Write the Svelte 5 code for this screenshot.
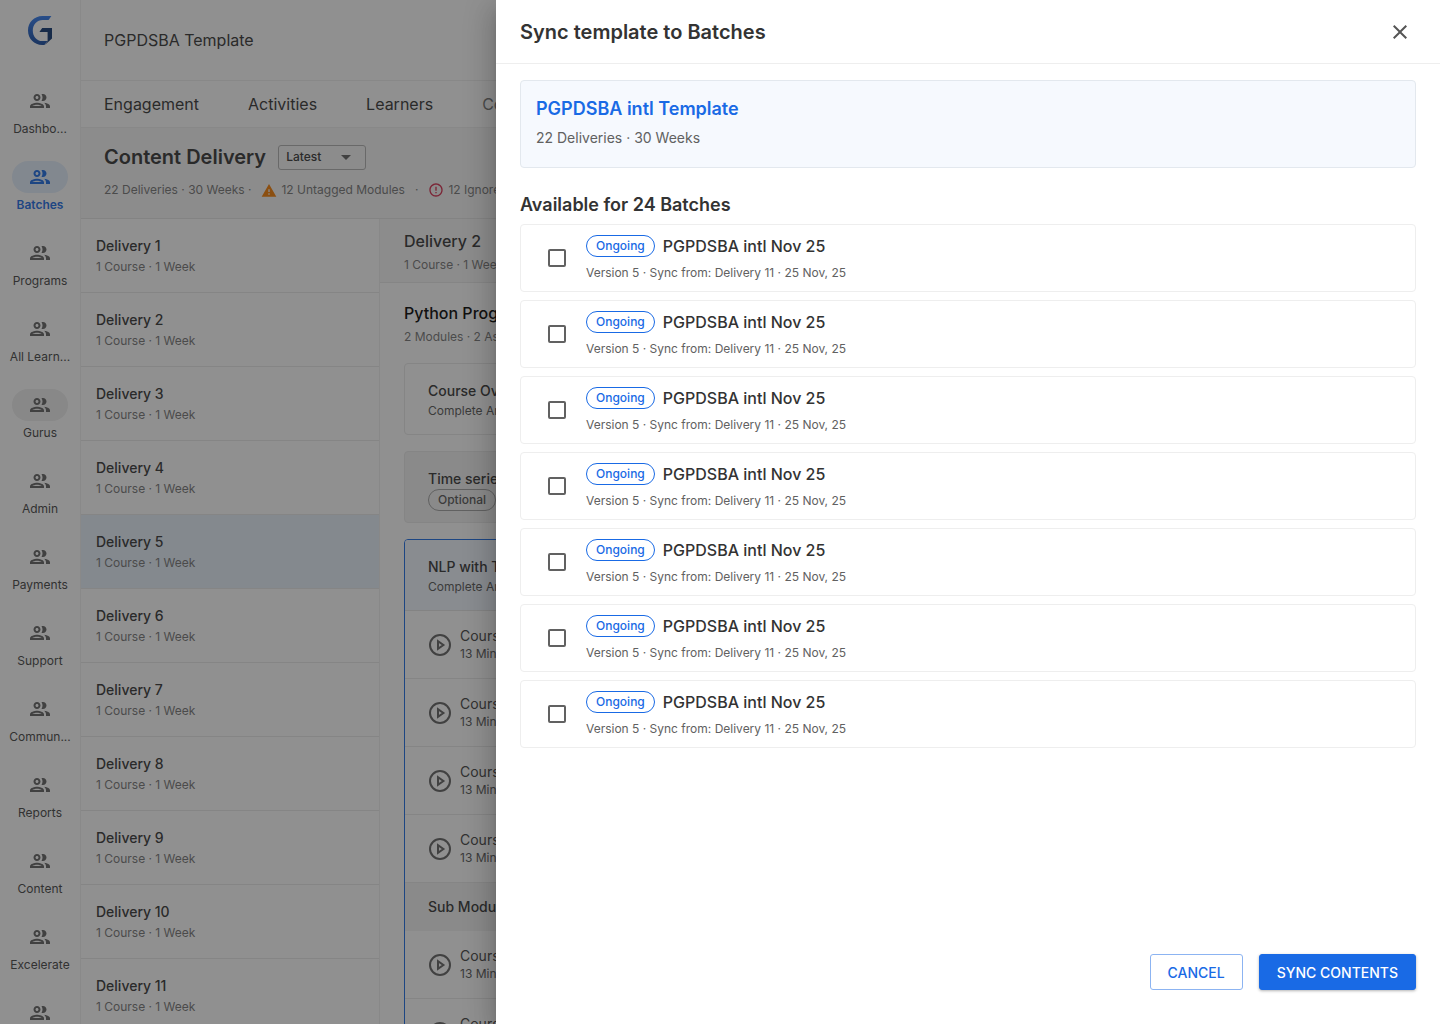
<script>
  const nav = ['Dashbo...', 'Batches', 'Programs', 'All Learn...', 'Gurus', 'Admin', 'Payments', 'Support', 'Commun...', 'Reports', 'Content', 'Excelerate', 'Settings'];
  const deliveries = Array.from({ length: 11 }, (_, i) => i + 1);
  let batches = $state(Array.from({ length: 7 }, () => ({ checked: false })));
  let version = $state('Latest');
</script>

{#snippet people()}
  <svg width="24" height="24" viewBox="0 0 24 24" fill="currentColor" aria-hidden="true">
    <path d="M9 13.75c-2.34 0-7 1.17-7 3.5V19h14v-1.75c0-2.33-4.66-3.5-7-3.5zM4.34 17c.84-.58 2.87-1.25 4.66-1.25s3.82.67 4.66 1.25H4.34zM9 12c1.93 0 3.5-1.57 3.5-3.5S10.93 5 9 5 5.5 6.57 5.5 8.5 7.07 12 9 12zm0-5c.83 0 1.5.67 1.5 1.5S9.83 10 9 10s-1.5-.67-1.5-1.5S8.17 7 9 7zm7.04 6.81c1.16.84 1.96 1.96 1.96 3.44V19h4v-1.75c0-2.02-3.5-3.17-5.96-3.44zM15 12c1.93 0 3.5-1.57 3.5-3.5S16.93 5 15 5c-.54 0-1.04.13-1.5.35.63.89 1 1.98 1 3.15s-.37 2.26-1 3.15c.46.22.96.35 1.5.35z" />
  </svg>
{/snippet}

{#snippet lesson()}
  <li class="lesson">
    <svg width="24" height="24" viewBox="0 0 24 24" fill="none" stroke="currentColor" stroke-width="2" aria-hidden="true">
      <circle cx="12" cy="12" r="10" />
      <path d="M10 8.2v7.6l5.4-3.8z" />
    </svg>
    <div>
      <p class="lesson-title">Course Video</p>
      <p class="note">13 Min</p>
    </div>
  </li>
{/snippet}

<div class="app">
  <nav class="rail" aria-label="Main">
    <svg class="logo" width="24" height="30" viewBox="0 0 24 30" aria-label="Home">
      <defs>
        <linearGradient id="ring" x1="0" y1="0" x2="0" y2="1">
          <stop offset="0" stop-color="#2f7af0" />
          <stop offset="1" stop-color="#14489e" />
        </linearGradient>
      </defs>
      <path fill="url(#ring)" d="M23.4 0 20.6 4H14.6C9.2 4 4.8 8.6 4.8 14.5s4 10.6 9.4 10.6H19.5L16.4 29H14.2C6.2 29 0 22.6 0 14.5S6.2 0 14.4 0z" />
      <path fill="#0c3471" d="M14.2 12H24v10.4L16.8 29 19.6 25.1V16H11.4z" />
    </svg>
    <ul>
      {#each nav as label}
        <li>
          <a href="#nav" class:active={label === 'Batches'} class:hovered={label === 'Gurus'}>
            <span class="pill">{@render people()}</span>
            <span class="nav-label">{label}</span>
          </a>
        </li>
      {/each}
    </ul>
  </nav>

  <main>
    <header class="top">PGPDSBA Template</header>
    <nav class="tabs" aria-label="Sections">
      <a href="#engagement">Engagement</a>
      <a href="#activities">Activities</a>
      <a href="#learners">Learners</a>
      <a href="#content" class="soft">Content</a>
    </nav>
    <section class="summary">
      <div class="title-row">
        <h1>Content Delivery</h1>
        <div class="select">
          <select aria-label="Version" bind:value={version}>
            <option>Latest</option>
            <option>Previous</option>
          </select>
          <svg width="10" height="5" viewBox="0 0 10 5" aria-hidden="true"><path d="M0 0h10L5 5z" fill="currentColor" /></svg>
        </div>
      </div>
      <div class="stats">
        <span>22 Deliveries · 30 Weeks ·</span>
        <span class="stat">
          <svg width="16" height="16" viewBox="0 0 24 24" aria-hidden="true"><path fill="#f57c00" d="M1 22h22L12 3zm12-3h-2v-2h2zm0-4h-2v-4h2z" /></svg>
          12 Untagged Modules
        </span>
        <span>·</span>
        <span class="stat">
          <svg width="16" height="16" viewBox="0 0 24 24" aria-hidden="true"><path fill="#d5284a" d="M11 15h2v2h-2zm0-8h2v6h-2zm.99-5C6.47 2 2 6.48 2 12s4.47 10 9.99 10C17.52 22 22 17.52 22 12S17.52 2 11.99 2zM12 20c-4.42 0-8-3.58-8-8s3.58-8 8-8 8 3.58 8 8-3.58 8-8 8z" /></svg>
          12 Ignored
        </span>
      </div>
    </section>
    <div class="columns">
      <ul class="deliveries">
        {#each deliveries as n}
          <li class:selected={n === 5}>
            <p class="name">Delivery {n}</p>
            <p class="meta">1 Course · 1 Week</p>
          </li>
        {/each}
      </ul>
      <section class="detail">
        <header>
          <h2>Delivery 2</h2>
          <p class="meta">1 Course · 1 Week</p>
        </header>
        <div class="modules">
          <div class="course">
            <h3>Python Programming</h3>
            <p class="meta">2 Modules · 2 Assessments</p>
          </div>
          <article class="card plain">
            <p class="name">Course Overview</p>
            <p class="note">Complete Anytime</p>
          </article>
          <article class="card muted">
            <p class="name">Time series</p>
            <span class="optional">Optional</span>
          </article>
          <article class="card open">
            <div class="open-head">
              <p class="name">NLP with Text</p>
              <p class="note">Complete Anytime</p>
            </div>
            <ul>
              {#each [1, 2, 3, 4] as _}{@render lesson()}{/each}
            </ul>
            <p class="sub">Sub Module</p>
            <ul>
              {#each [1, 2] as _}{@render lesson()}{/each}
            </ul>
          </article>
        </div>
      </section>
    </div>
  </main>

  <div class="scrim"></div>

  <div class="drawer" role="dialog" aria-modal="true" aria-labelledby="drawer-title">
    <header class="drawer-head">
      <h2 id="drawer-title">Sync template to Batches</h2>
      <button class="close" aria-label="Close">
        <svg width="24" height="24" viewBox="0 0 24 24" aria-hidden="true"><path fill="currentColor" d="M19 6.41 17.59 5 12 10.59 6.41 5 5 6.41 10.59 12 5 17.59 6.41 19 12 13.41 17.59 19 19 17.59 13.41 12z" /></svg>
      </button>
    </header>
    <div class="drawer-body">
      <section class="template">
        <h3>PGPDSBA intl Template</h3>
        <p>22 Deliveries · 30 Weeks</p>
      </section>
      <h3 class="available">Available for 24 Batches</h3>
      <ul class="batches">
        {#each batches as batch}
          <li>
            <label class="batch">
              <input type="checkbox" bind:checked={batch.checked} />
              <span class="batch-text">
                <span class="batch-title"><span class="chip">Ongoing</span>PGPDSBA intl Nov 25</span>
                <span class="batch-meta">Version 5 · Sync from: Delivery 11 · 25 Nov, 25</span>
              </span>
            </label>
          </li>
        {/each}
      </ul>
    </div>
    <footer>
      <button class="btn outline">CANCEL</button>
      <button class="btn solid">SYNC CONTENTS</button>
    </footer>
  </div>
</div>

<style>
  :global(body) { margin: 0; }
  .app {
    position: relative;
    display: flex;
    height: 100vh;
    overflow: hidden;
    background: #fff;
    color: #333;
    font-family: Inter, "Liberation Sans", sans-serif;
    font-size: 14px;
    line-height: 20px;
  }
  .app *, .app { box-sizing: border-box; }
  h1, h2, h3, p, ul { margin: 0; padding: 0; }
  ul { list-style: none; }
  a { color: inherit; text-decoration: none; }
  svg { display: block; flex: none; }

  .rail { flex: none; width: 80px; padding-top: 16px; }
  .logo { margin: 0 auto 39px 28px; }
  .rail ul { display: flex; flex-direction: column; gap: 24px; }
  .rail a { display: flex; flex-direction: column; align-items: center; gap: 4px; color: #616161; }
  .pill { display: flex; align-items: center; justify-content: center; width: 56px; height: 32px; border-radius: 16px; }
  .nav-label { font-size: 12px; line-height: 16px; color: #424242; white-space: nowrap; }
  .rail .active, .rail .active .nav-label { color: #196ae5; font-weight: 600; }
  .active .pill { background: #e3eefc; }
  .hovered .pill { background: #eee; }

  main { flex: 1; min-width: 0; display: flex; flex-direction: column; border-left: 1px solid #f0f0f0; }
  .top { flex: none; padding: 30px 23px; font-size: 16px; border-bottom: 1px solid #eee; }
  .tabs { flex: none; display: flex; gap: 49px; padding: 13px 23px; font-size: 16px; border-bottom: 1px solid #eee; }
  .soft { color: #757575; }
  .summary { flex: none; padding: 16px 23px 18px; background: #f7f7f7; border-bottom: 1px solid #e4e4e4; }
  .title-row { display: flex; align-items: center; gap: 12px; height: 26px; margin-bottom: 10px; }
  h1 { font-size: 20px; line-height: 26px; font-weight: 600; }
  .select { position: relative; color: #616161; }
  .select select {
    display: block; appearance: none; width: 88px; height: 25px; padding: 0 7px; border: 1px solid #b0b0b0; border-radius: 3px;
    background: transparent; color: #333; font: 500 12px/16px Inter, sans-serif;
  }
  .select svg { position: absolute; right: 15px; top: 10px; pointer-events: none; }
  .stats { display: flex; gap: 10px; font-size: 12px; line-height: 20px; color: #757575; white-space: nowrap; }
  .stat { display: flex; align-items: center; gap: 4px; }

  .columns { flex: 1; min-height: 0; display: flex; }
  .deliveries { flex: none; width: 299px; border-right: 1px solid #eee; }
  .deliveries li { height: 74px; padding: 17px 15px; border-bottom: 1px solid #e8e8e8; }
  .deliveries .selected { background: #e6f0fb; }
  .name { font-size: 14px; line-height: 20px; font-weight: 500; }
  .meta { font-size: 12px; line-height: 20px; color: #757575; }
  .deliveries .meta { margin-top: 1px; }
  .note { font-size: 12px; line-height: 20px; color: #555; }
  .detail { flex: 1; min-width: 0; }
  .detail > header { padding: 10px 24px 7px; background: #f7f7f7; border-bottom: 1px solid #e8e8e8; }
  .detail h2 { font-size: 16px; line-height: 24px; font-weight: 500; margin-bottom: 2px; }
  .detail h3 { font-size: 16px; line-height: 24px; font-weight: 500; color: #000; margin-bottom: 2px; }
  .modules { display: flex; flex-direction: column; gap: 16px; padding: 18px 24px; }
  .card { border: 1px solid #e8e8e8; border-radius: 4px; }
  .plain, .muted { height: 72px; padding: 17px 23px; }
  .muted { background: #f3f3f3; }
  .optional {
    display: inline-block; padding: 0 9px; border: 1px solid #a0a0a0; border-radius: 11px;
    font-size: 12px; line-height: 20px; font-weight: 500; color: #555;
  }
  .open { border-color: #196ae5; overflow: hidden; }
  .open-head { padding: 17px 23px 13px; background: #f0f6ff; border-bottom: 1px solid #e4e4e4; }
  .lesson { display: flex; align-items: center; gap: 8px; height: 68px; padding: 0 23px; color: #616161; border-bottom: 1px solid #e8e8e8; }
  .lesson-title { font-size: 14px; line-height: 18px; color: #424242; }
  .lesson .note { line-height: 18px; }
  .sub { padding: 14px 23px; background: #f3f3f3; font-weight: 500; }

  .scrim { position: absolute; inset: 0; background: rgba(33, 33, 33, 0.5); }

  .drawer {
    position: absolute; top: 0; right: 0; bottom: 0; left: 496px;
    display: flex; flex-direction: column; background: #fff;
    box-shadow: 0 8px 10px -5px rgba(0, 0, 0, 0.2), 0 16px 24px 2px rgba(0, 0, 0, 0.14), 0 6px 30px 5px rgba(0, 0, 0, 0.12);
  }
  .drawer-head { display: flex; align-items: center; justify-content: space-between; padding: 16px 28px 15px 24px; border-bottom: 1px solid #eee; }
  .drawer-head h2 { font-size: 20px; line-height: 32px; font-weight: 600; }
  button { font-family: inherit; cursor: pointer; }
  .close { padding: 0; border: 0; background: none; color: #555; }
  .drawer-body { flex: 1; min-height: 0; padding: 16px 24px; }
  .template { padding: 15px; height: 88px; border: 1px solid #e3e8ee; border-radius: 4px; background: #f6f9fe; }
  .template h3 { font-size: 18px; line-height: 26px; font-weight: 600; color: #196ae5; }
  .template p { margin-top: 6px; color: #616161; }
  .available { margin: 24px 0 6px; font-size: 18px; line-height: 26px; font-weight: 600; }
  .batches { display: flex; flex-direction: column; gap: 8px; }
  .batch { display: flex; align-items: center; gap: 20px; height: 68px; padding: 0 27px; border: 1px solid #eee; border-radius: 4px; }
  .batch input { appearance: none; flex: none; width: 18px; height: 18px; margin: 0; border: 2px solid #616161; border-radius: 2px; }
  .batch input:checked { background: #196ae5; border-color: #196ae5; }
  .batch-text { display: flex; flex-direction: column; gap: 8px; }
  .batch-title { display: flex; align-items: center; gap: 8px; font-size: 16px; line-height: 22px; font-weight: 500; }
  .batch-meta { font-size: 12px; line-height: 16px; color: #616161; }
  .chip { padding: 0 9px; border: 1px solid #196ae5; border-radius: 11px; color: #196ae5; font-size: 12px; line-height: 20px; }
  footer { display: flex; justify-content: flex-end; gap: 16px; padding: 0 24px 34px; }
  .btn { height: 36px; padding: 0 17px; border: 1px solid #196ae5; border-radius: 3px; font-size: 14px; font-weight: 500; }
  .outline { background: #fff; color: #196ae5; border-color: #8cb4f2; }
  .solid { background: #196ae5; color: #fff; box-shadow: 0 1px 3px rgba(0, 0, 0, 0.3); }
</style>
